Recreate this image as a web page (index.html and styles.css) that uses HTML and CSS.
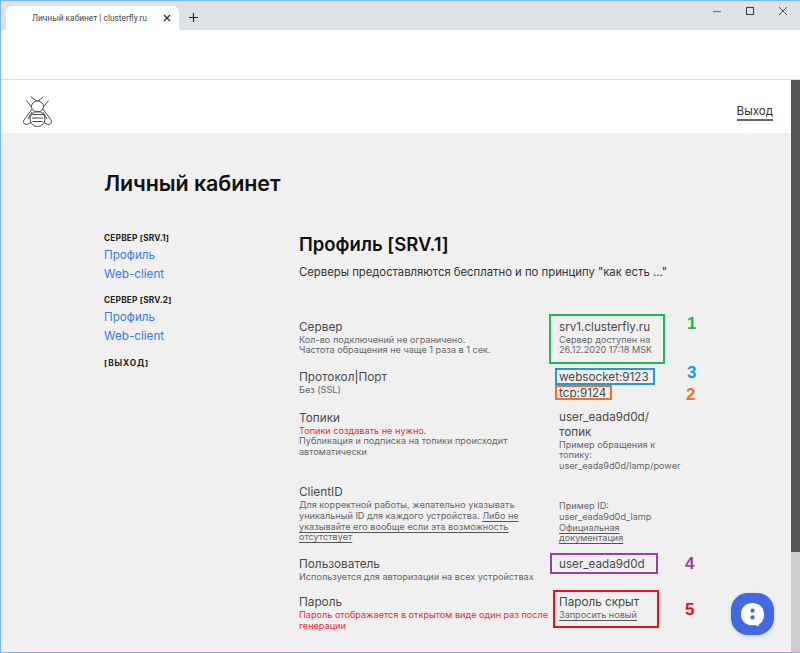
FILE: index.html
```html
<!DOCTYPE html>
<html lang="ru">
<head>
<meta charset="utf-8">
<title>Личный кабинет | clusterfly.ru</title>
<link rel="stylesheet" href="styles.css">
</head>
<body>
<div class="window">
  <div class="tabstrip">
    <div class="tab">
      <span class="tab-title">Личный кабинет | clusterfly.ru</span>
      <svg class="tab-close" width="8" height="8" viewBox="0 0 8 8"><path d="M1 1l6 6M7 1L1 7" stroke="#333" stroke-width="1.3" fill="none"/></svg>
    </div>
    <svg class="new-tab" width="11" height="11" viewBox="0 0 11 11"><path d="M5.500 1v9M1 5.500h9" stroke="#222" stroke-width="1.200" fill="none"/></svg>
    <div class="win-controls">
      <svg width="10" height="10" viewBox="0 0 10 10"><path d="M1 5.500h8" stroke="#777" stroke-width="1.200"/></svg>
      <svg width="10" height="10" viewBox="0 0 10 10"><rect x="1.500" y="1.500" width="7" height="7" fill="none" stroke="#444" stroke-width="1.100"/></svg>
      <svg width="10" height="10" viewBox="0 0 10 10"><path d="M1 1l8 8M9 1l-8 8" stroke="#555" stroke-width="1"/></svg>
    </div>
  </div>
  <div class="toolbar"></div>
  <div class="viewport">
    <div class="page">
      <header class="site-header">
        <svg class="logo" width="32" height="32" viewBox="0 0 32 32" fill="none" stroke="#333" stroke-width=".9">
          <path d="M8.700 .7L15 5.200M21.300 .7L16 5.200"/>
          <path d="M4.500 4.500L9.500 11M26.500 4.500L21.500 11"/>
          <ellipse cx="15.500" cy="10.500" rx="6" ry="5.500"/>
          <ellipse cx="15.500" cy="23" rx="7.500" ry="7.500"/>
          <path d="M10.500 18.500h10M10 22h11M10.500 25.500h10"/>
          <path d="M10 13L2 24C.5 27 3 29.500 6 28L9 26.500"/>
          <path d="M21 13L29 24C30.500 27 28 29.500 25 28L22 26.500"/>
          <path d="M10 16L6 23M21 16L25 23"/>
        </svg>
        <a class="logout">Выход</a>
      </header>
      <main class="content">
        <h1>Личный кабинет</h1>
        <div class="columns">
          <nav class="side">
            <h5>СЕРВЕР [SRV.1]</h5>
            <a>Профиль</a>
            <a>Web-client</a>
            <h5 class="second">СЕРВЕР [SRV.2]</h5>
            <a>Профиль</a>
            <a>Web-client</a>
            <h5 class="exit">[ВЫХОД]</h5>
          </nav>
          <section class="profile">
            <h2>Профиль [SRV.1]</h2>
            <p class="lead">Серверы предоставляются бесплатно и по принципу "как есть ..."</p>
            <div class="table">
              <div class="row first">
                <div class="cell-l">
                  <div class="name">Сервер</div>
                  <div class="note">Кол-во подключений не ограничено.<br>Частота обращения не чаще 1 раза в 1 сек.</div>
                </div>
                <div class="cell-r">
                  <div class="value">srv1.clusterfly.ru</div>
                  <div class="note">Сервер доступен на<br>26.12.2020 17:18 MSK</div>
                </div>
              </div>
              <div class="row compact">
                <div class="cell-l">
                  <div class="name">Протокол<span class="pipe">|</span>Порт</div>
                  <div class="note">Без (SSL)</div>
                </div>
                <div class="cell-r">
                  <div class="value">websocket:9123</div>
                  <div class="value">tcp:9124</div>
                </div>
              </div>
              <div class="row topics">
                <div class="cell-l">
                  <div class="name">Топики</div>
                  <div class="note"><span class="red">Топики создавать не нужно.</span><br>Публикация и подписка на топики происходит автоматически</div>
                </div>
                <div class="cell-r">
                  <div class="value tall">user_eada9d0d/<br>топик</div>
                  <div class="note">Пример обращения к топику:<br>user_eada9d0d/lamp/power</div>
                </div>
              </div>
              <div class="row">
                <div class="cell-l">
                  <div class="name">ClientID</div>
                  <div class="note">Для корректной работы, желательно указывать уникальный ID для каждого устройства. <span class="doc">Либо не указывайте его вообще если эта возможность отсутствует</span></div>
                </div>
                <div class="cell-r pad">
                  <div class="note">Пример ID:<br>user_eada9d0d_lamp<br><span class="doc">Официальная<br>документация</span></div>
                </div>
              </div>
              <div class="row">
                <div class="cell-l">
                  <div class="name">Пользователь</div>
                  <div class="note">Используется для авторизации на всех устройствах</div>
                </div>
                <div class="cell-r">
                  <div class="value">user_eada9d0d</div>
                </div>
              </div>
              <div class="row">
                <div class="cell-l">
                  <div class="name">Пароль</div>
                  <div class="note red">Пароль отображается в открытом виде один раз после генерации</div>
                </div>
                <div class="cell-r">
                  <div class="value">Пароль скрыт</div>
                  <div class="note"><span class="doc">Запросить новый</span></div>
                </div>
              </div>
            </div>
          </section>
        </div>
      </main>
    </div>
    <div class="scrollbar"><div class="thumb"></div></div>

    <div class="box b1"></div>
    <div class="box b2"></div>
    <div class="box b3"></div>
    <div class="box b4"></div>
    <div class="box b5"></div>
    <span class="num n1">1</span>
    <span class="num n2">3</span>
    <span class="num n3">2</span>
    <span class="num n4">4</span>
    <span class="num n5">5</span>
    <button class="chat" aria-label="Чат">
      <svg width="25" height="25" viewBox="0 0 26 26"><path d="M13 1C19.500 1 25 5 25 13c0 5-2 8-5 10l-1 2.500-3-1.500c-1 .2-2 .3-3 .3C6 24.300 1 20 1 13 1 5 6.500 1 13 1z" fill="#fff"/><circle cx="13" cy="9" r="2.200" fill="#4169e1"/><circle cx="13" cy="16" r="2.200" fill="#4169e1"/></svg>
    </button>
  </div>
</div>
</body>
</html>
```
FILE: styles.css
```css
* { box-sizing: border-box; }
html, body { margin: 0; height: 100%; overflow: hidden; }
body { font-family: Inter, "Liberation Sans", sans-serif; color: #444; }
.window {
  width: 800px; height: 653px; display: flex; flex-direction: column;
  border: 1px solid #7ab8ee; border-right: 0; background: #fff; position: relative;
}
.tabstrip { height: 29px; flex: none; background: #dee1e6; display: flex; align-items: flex-end; padding-left: 5px; }
.tab {
  width: 173px; height: 24px; background: #fff; border-radius: 6px 6px 0 0;
  display: flex; align-items: center; padding-left: 26px; position: relative;
}
.tab-title { font: 8.400px "Roboto", sans-serif; color: #444; white-space: nowrap; flex: 1; }
.tab-close { margin-right: 8px; }
.new-tab { margin: 0 0 7px 9px; }
.win-controls { margin-left: auto; display: flex; gap: 23px; align-self: flex-start; padding: 5px 12px 0 0; }
.win-controls svg { display: block; }
.toolbar { height: 50px; background: #fff; border-bottom: 1px solid #dcdcdc; flex: none; }
.viewport { flex: 1; position: relative; display: flex; overflow: hidden; }
.page { flex: 1; min-width: 0; background: #f0f0f0; }
.site-header { height: 53px; background: #fff; display: flex; align-items: center; justify-content: space-between; padding: 0 18px 0 21px; }
.logo { display: block; margin-top: 11px; }
.logout { font-size: 11.600px; color: #333; border-bottom: 2px solid #666; padding-bottom: 1px; margin-top: 11px; }
.content { padding: 0 0 0 103px; }
h1 { font-size: 21.500px; font-weight: 600; color: #111; margin: 0; padding-top: 38px; line-height: 24px; letter-spacing: -.1px; }
.columns { display: flex; margin-top: 38px; }
.side { width: 195px; flex: none; display: flex; flex-direction: column; }
h5 { font-size: 8.300px; font-weight: 700; color: #222; margin: 0; line-height: 11px; letter-spacing: .2px; }
.side a { font-size: 11.700px; color: #3b7ddb; line-height: 18.500px; }
.side h5 + a { margin-top: 2px; }
.second { margin-top: 12px; }
.exit { margin-top: 13px; letter-spacing: .9px; }
.profile { width: 492px; }
h2 { font-size: 18.500px; font-weight: 600; color: #111; margin: 0; line-height: 22px; }
.lead { font-size: 11.300px; color: #333; margin: 9px 0 0; line-height: 16px; }
.table { margin-top: 33px; width: 388px; }
.row { display: flex; border-bottom: 1px solid #ececec; padding: 5.500px 0; }
.row.first { padding-bottom: 6.500px; }
.row.compact { padding-bottom: 2.500px; }
.row.topics { padding-bottom: 6.500px; }
.row:last-child { border-bottom: 0; }
.cell-l { width: 260px; flex: none; padding-right: 6px; }
.cell-r { width: 125px; flex: none; }
.name { font-size: 11.800px; line-height: 16px; color: #4a4a4a; }
.value { font-size: 11.700px; line-height: 16px; color: #4a4a4a; white-space: nowrap; }
.value.tall { line-height: 15px; }
.note { font-size: 9.150px; line-height: 10.600px; color: #666; }
.red { color: #f0243a; }
.doc { text-decoration: underline; text-decoration-color: #555; text-underline-offset: 2px; }
.pipe { color: #333; }
.pad { padding-top: 17px; }
.scrollbar { width: 9px; flex: none; background: #cdcdcd; }
.thumb { height: 472px; background: #555; }
.box { position: absolute; border: 2px solid; }
.b1 { left: 548px; top: 234px; width: 116px; height: 50px; border-color: #1db954; }
.b2 { left: 554px; top: 288px; width: 100px; height: 17px; border-color: #1a9be6; }
.b3 { left: 554px; top: 305px; width: 57px; height: 15px; border-color: #f37021; }
.b4 { left: 549px; top: 473px; width: 108px; height: 21px; border-color: #9b3ea6; }
.b5 { left: 552px; top: 510px; width: 106px; height: 38px; border-color: #e8101c; }
.num { position: absolute; font: 700 17px "Liberation Sans", sans-serif; line-height: 18px; }
.n1 { left: 686px; top: 235px; color: #28b24b; }
.n2 { left: 686px; top: 284px; color: #1a9be6; }
.n3 { left: 685px; top: 306px; color: #f37021; }
.n4 { left: 684px; top: 475px; color: #9b3ea6; }
.n5 { left: 684px; top: 521px; color: #e8101c; }
.chat {
  position: absolute; left: 730px; top: 513px; width: 43px; height: 42px; padding: 0; border: 0;
  border-radius: 17px; background: #4169e1; display: flex; align-items: center; justify-content: center;
  box-shadow: 0 1px 4px rgba(0,0,0,.15);
}
.chat svg { display: block; }
```
